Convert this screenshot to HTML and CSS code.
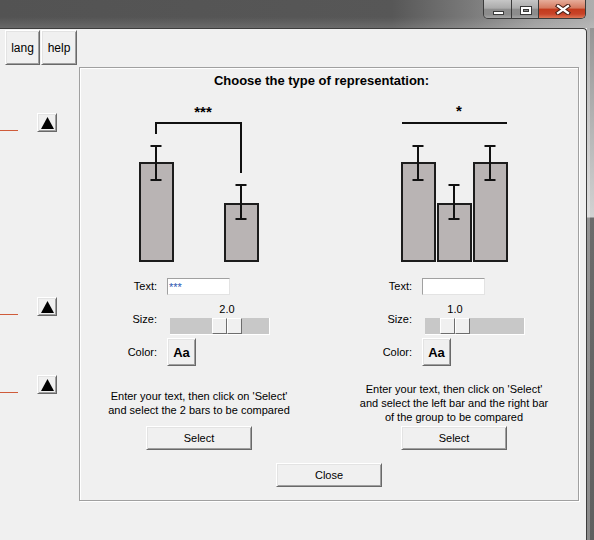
FILE: index.html
```html
<!DOCTYPE html>
<html>
<head>
<meta charset="utf-8">
<title>Representation</title>
<link rel="stylesheet" href="styles.css">
</head>
<body>
<div class="window">
  <div class="titlebar">
    <div class="wctl">
      <div class="wbtn wmin"><span class="ico-min"></span></div>
      <div class="wbtn wmax">
        <svg width="12" height="9" viewBox="0 0 12 9"><rect x="0.5" y="0.5" width="11" height="8" fill="#fff" stroke="#3a3a3a"/><rect x="3.5" y="3.5" width="5" height="2" fill="#8a8a8a" stroke="#3a3a3a"/></svg>
      </div>
      <div class="wbtn wclose">
        <svg width="16" height="11" viewBox="0 0 16 11"><path d="M3 2L13 9M13 2L3 9" stroke="#4a2218" stroke-width="4.4" stroke-linecap="square"/><path d="M3 2L13 9M13 2L3 9" stroke="#fff" stroke-width="2.2" stroke-linecap="square"/></svg>
      </div>
    </div>
  </div>
  <div class="frame-body">
    <div class="client">
      <div class="side">
        <div class="toolbar">
          <button class="btn tbtn">lang</button>
          <button class="btn tbtn tbtn-help">help</button>
        </div>
        <div class="arow r1"><span class="mark"></span><button class="btn abtn"><svg width="13" height="12" viewBox="0 0 13 12"><polygon points="6.5,0 13,12 0,12" fill="#000"/></svg></button></div>
        <div class="arow r2"><span class="mark"></span><button class="btn abtn"><svg width="13" height="12" viewBox="0 0 13 12"><polygon points="6.5,0 13,12 0,12" fill="#000"/></svg></button></div>
        <div class="arow r3"><span class="mark"></span><button class="btn abtn"><svg width="13" height="12" viewBox="0 0 13 12"><polygon points="6.5,0 13,12 0,12" fill="#000"/></svg></button></div>
      </div>

      <div class="panel">
        <div class="ptitle">Choose the type of representation:</div>
        <div class="cols">
          <div class="col">
            <svg class="chart" width="238" height="185" viewBox="0 0 238 185">
              <text x="123" y="28" class="sig">***</text>
              <path d="M76 45V34H161V84" fill="none" stroke="#111" stroke-width="2"/>
              <rect x="60" y="74" width="33" height="98" class="bar"/>
              <rect x="145" y="115" width="33" height="57" class="bar"/>
              <path d="M76 57V91M70.5 57H81.5M70.5 91H81.5" class="err"/>
              <path d="M161 96V130M155.5 96H166.5M155.5 130H166.5" class="err"/>
            </svg>
            <div class="frow frow-text">
              <span class="flabel">Text:</span>
              <div class="tinput">***</div>
            </div>
            <div class="frow frow-size">
              <span class="flabel">Size:</span>
              <div class="slider">
                <span class="sval" style="left:42px">2.0</span>
                <div class="strack"></div>
                <div class="sthumb" style="left:42px"><span></span><span></span></div>
              </div>
            </div>
            <div class="frow frow-color">
              <span class="flabel">Color:</span>
              <button class="btn aa">Aa</button>
            </div>
            <div class="hint">Enter your text, then click on 'Select'<br>and select the 2 bars to be compared</div>
            <button class="btn sel">Select</button>
          </div>

          <div class="col">
            <svg class="chart" width="238" height="185" viewBox="0 0 238 185">
              <text x="124" y="27" class="sig">*</text>
              <path d="M67 34H172" fill="none" stroke="#111" stroke-width="2"/>
              <rect x="67" y="74" width="33" height="98" class="bar"/>
              <rect x="103" y="115" width="33" height="57" class="bar"/>
              <rect x="139" y="74" width="33" height="98" class="bar"/>
              <path d="M83 57V91M77.5 57H88.5M77.5 91H88.5" class="err"/>
              <path d="M119 96V130M113.5 96H124.5M113.5 130H124.5" class="err"/>
              <path d="M155 57V91M149.5 57H160.5M149.5 91H160.5" class="err"/>
            </svg>
            <div class="frow frow-text">
              <span class="flabel">Text:</span>
              <div class="tinput"></div>
            </div>
            <div class="frow frow-size">
              <span class="flabel">Size:</span>
              <div class="slider">
                <span class="sval" style="left:15px">1.0</span>
                <div class="strack"></div>
                <div class="sthumb" style="left:15px"><span></span><span></span></div>
              </div>
            </div>
            <div class="frow frow-color">
              <span class="flabel">Color:</span>
              <button class="btn aa">Aa</button>
            </div>
            <div class="hint">Enter your text, then click on 'Select'<br>and select the left bar and the right bar<br>of the group to be compared</div>
            <button class="btn sel">Select</button>
          </div>
        </div>
        <div class="close-row"><button class="btn closeb">Close</button></div>
      </div>
    </div>
    <div class="rframe"></div>
  </div>
</div>
</body>
</html>
```

FILE: styles.css
```css
* { box-sizing: border-box; }
html, body { margin: 0; padding: 0; overflow: hidden; }
body {
  width: 594px; height: 540px;
  font-family: "Liberation Sans", Arial, sans-serif;
  font-size: 11px; color: #000; background: #f0f0f0;
}
.window { width: 594px; height: 540px; display: flex; flex-direction: column; }

/* title bar */
.titlebar {
  height: 28px; flex: none;
  display: flex; justify-content: flex-end; align-items: flex-start;
  padding-right: 8px;
  background:
    linear-gradient(to bottom, rgba(255,255,255,0) 0, rgba(255,255,255,0) 17px, rgba(255,255,255,0.12) 28px),
    linear-gradient(to right, #535353 0%, #575757 66%, #7a7a7a 79%, #9c9c9c 90%, #aeaeae 100%);
}
.wctl {
  display: flex; height: 19px;
  border: 1px solid #3b3b3b; border-top: none;
  border-radius: 0 0 5px 5px; overflow: hidden;
}
.wbtn { height: 18px; display: flex; justify-content: center; align-items: flex-start; }
.wmin, .wmax {
  border-right: 1px solid #3b3b3b;
  background: linear-gradient(to bottom, #c6c6c6 0%, #ababab 45%, #8d8d8d 52%, #8c8c8c 80%, #a4a4a4 100%);
}
.wmin { width: 28px; padding-top: 11px; padding-left: 2px; }
.wmax { width: 27px; padding-top: 6px; padding-left: 2px; }
.wclose {
  width: 46px; padding-top: 4px; padding-left: 2px;
  background: linear-gradient(to bottom, #e6ad9a 0%, #d57a60 44%, #c33b1d 52%, #c84328 78%, #dc7656 100%);
}
.ico-min { display: block; width: 11px; height: 4px; background: #fff; border: 1px solid #3a3a3a; }

/* body */
.frame-body { flex: 1; display: flex; min-height: 0; }
.client {
  width: 587px; flex: none;
  background: #f0f0f0;
  border-top: 1px solid #3d3d3d; border-right: 1px solid #3d3d3d;
  border-top-right-radius: 4px;
  display: flex; align-items: flex-start;
}
.rframe {
  flex: 1;
  background:
    linear-gradient(to right, rgba(255,255,255,0.28) 0, rgba(255,255,255,0.28) 3px, rgba(255,255,255,0) 3px),
    linear-gradient(to bottom, #959595 0, #d2d2d2 189px, #6b6b6b 190px, #5f5f5f 100%);
}

/* buttons */
.btn {
  font-family: "Liberation Sans", Arial, sans-serif;
  font-size: 11px; color: #000;
  background: #f0f0f0;
  border: 1px solid; border-color: #fff #696969 #696969 #fff;
  box-shadow: inset 1px 1px 0 #e3e3e3, inset -1px -1px 0 #a0a0a0;
  margin: 0; padding: 0;
  display: flex; align-items: center; justify-content: center;
}

/* side column */
.side { width: 79px; flex: none; padding-top: 1px; }
.toolbar { display: flex; gap: 1px; padding-left: 5px; }
.tbtn { width: 35px; height: 35px; font-size: 12px; }
.tbtn-help { width: 36px; }
.arow { display: flex; height: 19px; }
.r1 { margin-top: 48px; }
.r2 { margin-top: 165px; }
.r3 { margin-top: 59px; }
.mark { width: 18px; height: 1px; margin-top: 17px; background: #cf5b3a; }
.abtn { margin-left: 19px; width: 20px; height: 19px; }

/* panel */
.panel {
  width: 500px; height: 434px; flex: none;
  margin-top: 38px;
  border: 1px solid #a0a0a0;
  box-shadow: inset 1px 1px 0 #fff, 1px 1px 0 #fff;
  padding-top: 5px;
}
.ptitle {
  font-weight: bold; font-size: 13px; line-height: 16px;
  text-align: center; margin-right: 15px;
}
.cols { display: grid; grid-template-columns: 238px 238px; column-gap: 17px; }
.col { display: flex; flex-direction: column; }
.chart { display: block; }
.sig { font-family: "Liberation Sans", Arial, sans-serif; font-size: 15px; font-weight: bold; text-anchor: middle; fill: #000; }
.bar { fill: #b9b4b4; stroke: #1c1c1c; stroke-width: 2; }
.err { fill: none; stroke: #111; stroke-width: 2; }

.frow { display: flex; align-items: center; }
.flabel { width: 77px; flex: none; text-align: right; margin-right: 10px; line-height: 13px; }
.frow-text { margin-top: 4px; height: 17px; }
.frow-size { margin-top: 8px; }
.frow-color { margin-top: 3px; }

.tinput {
  width: 63px; height: 17px; background: #fff;
  border: 1px solid; border-color: #a0a0a0 #e3e3e3 #e3e3e3 #a0a0a0;
  padding: 1px 0 0 1px; line-height: 15px; color: #2a55b0;
}
.slider { position: relative; width: 100px; height: 32px; margin-left: 3px; }
.sval { position: absolute; top: 0; width: 30px; text-align: center; line-height: 13px; }
.strack {
  position: absolute; left: 0; top: 15px; width: 100px; height: 17px;
  background: #c8c8c8; border-right: 1px solid #fff; border-bottom: 1px solid #fff;
}
.sthumb { position: absolute; top: 15px; width: 30px; height: 16px; display: flex; }
.sthumb span {
  flex: 1; background: #f0f0f0;
  border: 1px solid; border-color: #fff #6d6d6d #6d6d6d #fff;
}
.aa { width: 29px; height: 28px; font-size: 13px; font-weight: bold; }

.hint {
  height: 46px; margin-top: 14px;
  display: flex; align-items: center; justify-content: center;
  text-align: center; line-height: 14px;
}
.sel { width: 106px; height: 24px; align-self: center; }
.close-row { display: flex; justify-content: center; margin-top: 13px; }
.closeb { width: 106px; height: 24px; }
```
